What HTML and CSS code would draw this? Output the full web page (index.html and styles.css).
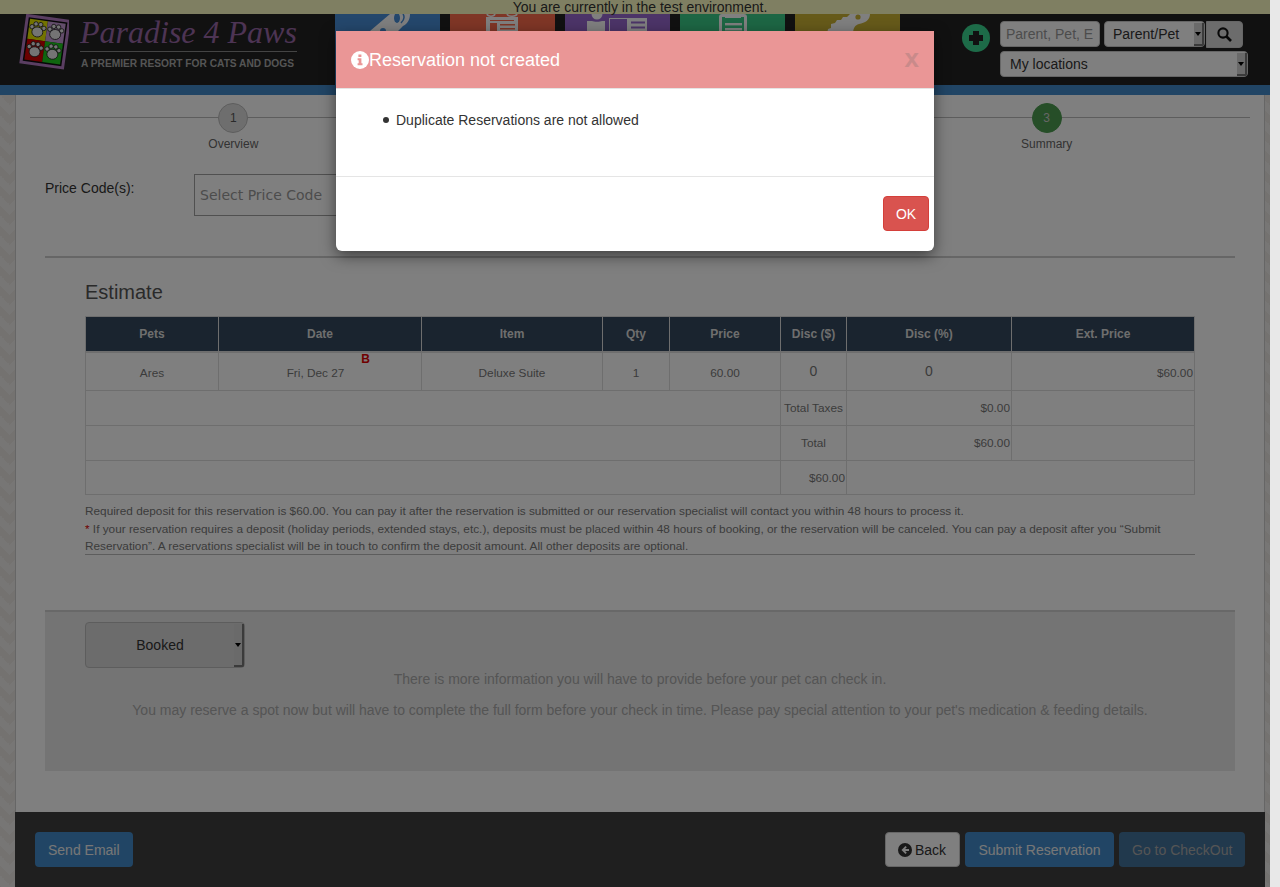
FILE: index.html
```html
<!DOCTYPE html>
<html lang="en">
<head>
    <meta charset="UTF-8">
    <meta name="viewport" content="width=device-width, initial-scale=1.0">
    <title>Reservation</title>
    <link rel="stylesheet" href="styles.css">
</head>
<body>
    <div class="page">
        <div class="test-banner">You are currently in the test environment.</div>

        <header class="top-header">
            <div class="logo">
                <svg class="logo-mark" width="50" height="56" viewBox="0 0 50 56">
                    <g transform="rotate(8 25 28)">
                        <rect x="5" y="4" width="42" height="47" fill="#0d0d0d" stroke="#b57cc4" stroke-width="3"/>
                        <rect x="8" y="7" width="18" height="20" fill="#e6e600"/>
                        <rect x="26" y="7" width="18" height="20" fill="#c79ad6"/>
                        <rect x="8" y="27" width="18" height="21" fill="#d40000"/>
                        <rect x="26" y="27" width="18" height="21" fill="#1ecb1e"/>
                        <g fill="#e8e8e8" stroke="#222" stroke-width="0.8">
                            <g id="paw">
                                <ellipse cx="17" cy="19" rx="5.5" ry="5"/>
                                <circle cx="11" cy="14.5" r="2.2"/>
                                <circle cx="14.6" cy="11.2" r="2.2"/>
                                <circle cx="19.4" cy="11.2" r="2.2"/>
                                <circle cx="23" cy="14.5" r="2.2"/>
                            </g>
                            <use href="#paw" x="18"/>
                            <use href="#paw" y="20"/>
                            <use href="#paw" x="18" y="20"/>
                        </g>
                    </g>
                </svg>
                <div class="logo-words">
                    <div class="logo-name">Paradise 4 Paws</div>
                    <div class="logo-tag">A PREMIER RESORT FOR CATS AND DOGS</div>
                </div>
            </div>

            <nav class="tiles">
                <div class="tile tile-blue">
                    <svg width="105" height="20" viewBox="0 0 105 20"><path d="M35 17 L55 0 H75 C75 6 72 10 68 12 L63 17 Z" fill="#fff"/><ellipse cx="62" cy="4" rx="3" ry="5" fill="#488fd8"/><path d="M68 0 C70 3 69 6 66 9" fill="none" stroke="#488fd8" stroke-width="1.5"/><circle cx="48" cy="17" r="3" fill="#488fd8"/></svg>
                </div>
                <div class="tile tile-red">
                    <svg width="105" height="20" viewBox="0 0 105 20"><path d="M37 0 C38 3 44 3 45 0 M57 0 C58 3 66 3 67 0" fill="none" stroke="#fff" stroke-width="1.6"/><rect x="36" y="3" width="32" height="17" fill="#fff"/><rect x="40" y="6" width="24" height="1" fill="#ff6c4c"/><rect x="40" y="9" width="7" height="8" fill="#ff6c4c"/><rect x="50" y="10" width="15" height="1.5" fill="#ff6c4c"/><rect x="50" y="14" width="15" height="1.5" fill="#ff6c4c"/></svg>
                </div>
                <div class="tile tile-purple">
                    <svg width="105" height="20" viewBox="0 0 105 20"><circle cx="32" cy="0" r="5.5" fill="#fff"/><path d="M22 7 H27 C29 8 35 8 37 7 H40 V20 H22 Z" fill="#fff"/><rect x="44" y="4" width="38" height="16" fill="#fff"/><rect x="45" y="5" width="17" height="15" fill="#9868d0"/><rect x="66" y="7.5" width="14" height="2" fill="#9868d0"/><rect x="66" y="12.5" width="14" height="2" fill="#9868d0"/></svg>
                </div>
                <div class="tile tile-green">
                    <svg width="105" height="20" viewBox="0 0 105 20"><path d="M39 20 V3 Q39 0 42 0 H64 Q67 0 67 3 V20 Z" fill="#fff"/><rect x="42" y="3" width="22" height="17" fill="#3acc88"/><rect x="45" y="2" width="16" height="2" fill="#fff"/><rect x="45" y="9" width="17" height="2.4" fill="#fff"/><rect x="45" y="14" width="17" height="2.4" fill="#fff"/></svg>
                </div>
                <div class="tile tile-yellow">
                    <svg width="105" height="20" viewBox="0 0 105 20"><path d="M32 20 L33 15 L36 14 L36 10 L40 9 L42 6 L46 6 L48 3 L52 3 L55 0 H75 C75 6 70 9 64 10 C60 11 58 14 58 20 Z" fill="#fff"/><circle cx="63" cy="3" r="2.6" fill="#ccb434"/></svg>
                </div>
            </nav>

            <div class="plus-icon">
                <svg width="28" height="28" viewBox="0 0 28 28"><path d="M11 7 H17 V11 H21 V17 H17 V21 H11 V17 H7 V11 H11 Z" fill="#222"/></svg>
            </div>

            <div class="search-area">
                <div class="search-row">
                    <input class="search-input" type="text" placeholder="Parent, Pet, E">
                    <div class="fake-select search-type"><span>Parent/Pet</span><i class="sel-arrow"></i></div>
                    <button class="search-btn">
                        <svg width="15" height="15" viewBox="0 0 15 15"><circle cx="6" cy="6" r="4.6" fill="none" stroke="#111" stroke-width="2.1"/><path d="M9.5 9.5 L14 14" stroke="#111" stroke-width="2.6"/></svg>
                    </button>
                </div>
                <div class="fake-select location-select"><span>My locations</span><i class="sel-arrow"></i></div>
            </div>
        </header>

        <div class="blue-strip"></div>

        <div class="content-wrap">
            <main class="content">
                <div class="stepper">
                    <div class="step"><span class="step-num">1</span><span class="step-label">Overview</span></div>
                    <div class="step"><span class="step-num">2</span><span class="step-label">Details</span></div>
                    <div class="step"><span class="step-num step-done">3</span><span class="step-label">Summary</span></div>
                </div>

                <div class="price-row">
                    <label class="price-label">Price Code(s):</label>
                    <div class="price-select">Select Price Code</div>
                </div>

                <hr class="section-line">

                <section class="estimate">
                    <h3>Estimate</h3>
                    <table class="estimate-table">
                        <colgroup>
                            <col class="c1"><col class="c2"><col class="c3"><col class="c4"><col class="c5"><col class="c6"><col class="c7"><col class="c8">
                        </colgroup>
                        <thead>
                            <tr>
                                <th>Pets</th><th>Date</th><th>Item</th><th>Qty</th><th>Price</th><th>Disc ($)</th><th>Disc (%)</th><th>Ext. Price</th>
                            </tr>
                        </thead>
                        <tbody>
                            <tr class="row-item">
                                <td>Ares</td>
                                <td class="date-cell">Fri, Dec 27<b class="flag-b">B</b></td>
                                <td>Deluxe Suite</td>
                                <td>1</td>
                                <td>60.00</td>
                                <td class="disc">0</td>
                                <td class="disc">0</td>
                                <td class="right">$60.00</td>
                            </tr>
                            <tr>
                                <td colspan="5"></td>
                                <td>Total Taxes</td>
                                <td class="right">$0.00</td>
                                <td></td>
                            </tr>
                            <tr>
                                <td colspan="5"></td>
                                <td>Total</td>
                                <td class="right">$60.00</td>
                                <td></td>
                            </tr>
                            <tr>
                                <td colspan="5"></td>
                                <td class="right">$60.00</td>
                                <td colspan="2"></td>
                            </tr>
                        </tbody>
                    </table>
                    <div class="notes">
                        <p>Required deposit for this reservation is $60.00. You can pay it after the reservation is submitted or our reservation specialist will contact you within 48 hours to process it.</p>
                        <p><span class="star">*</span> If your reservation requires a deposit (holiday periods, extended stays, etc.), deposits must be placed within 48 hours of booking, or the reservation will be canceled. You can pay a deposit after you “Submit Reservation”. A reservations specialist will be in touch to confirm the deposit amount. All other deposits are optional.</p>
                    </div>
                </section>

                <section class="status-panel">
                    <div class="fake-select status-select"><span>Booked</span><i class="sel-arrow"></i></div>
                    <p class="info-one">There is more information you will have to provide before your pet can check in.</p>
                    <p class="info-two">You may reserve a spot now but will have to complete the full form before your check in time. Please pay special attention to your pet's medication &amp; feeding details.</p>
                </section>

                <footer class="action-bar">
                    <button class="btn btn-blue">Send Email</button>
                    <div class="action-right">
                        <button class="btn btn-plain">
                            <svg width="14" height="14" viewBox="0 0 14 14"><circle cx="7" cy="7" r="7" fill="#333"/><path d="M7.5 3 L3.5 7 L7.5 11 L8.8 9.7 L7.1 8 H11 V6 H7.1 L8.8 4.3 Z" fill="#fff"/></svg>
                            Back
                        </button>
                        <button class="btn btn-blue btn-submit">Submit Reservation</button>
                        <button class="btn btn-blue btn-off">Go to CheckOut</button>
                    </div>
                </footer>
            </main>
        </div>

        <!-- dialog -->
        <div class="dialog-overlay">
            <div class="dialog">
                <div class="dialog-header">
                    <svg width="18" height="18" viewBox="0 0 18 18"><circle cx="9" cy="9" r="9" fill="#fff"/><path d="M7.4 3.5 H10.4 V6 H7.4 Z M6.6 7.3 H10.4 V12.3 H11.5 V14.2 H6.6 V12.3 H7.7 V9.2 H6.6 Z" fill="#ea9696"/></svg>
                    <h3>Reservation not created</h3>
                    <button class="close-btn">x</button>
                </div>
                <div class="dialog-body">
                    <ul>
                        <li>Duplicate Reservations are not allowed</li>
                    </ul>
                </div>
                <div class="dialog-footer">
                    <button class="ok-btn">OK</button>
                </div>
            </div>
        </div>
    </div>
    <div class="scroll-strip"></div>
</body>
</html>
```

FILE: styles.css
```css
* {
    box-sizing: border-box;
}

html, body {
    height: 100%;
}

body {
    margin: 0;
    display: flex;
    overflow: hidden;
    font-family: "Liberation Sans", Arial, sans-serif;
    font-size: 14px;
    color: #333;
    background-color: #e8e8e8;
}

.page {
    position: relative;
    width: 1270px;
    height: 887px;
    flex: none;
    overflow: hidden;
}

.scroll-strip {
    flex: 1;
    background-color: #e8e8e8;
}

/* top banner */
.test-banner {
    position: relative;
    z-index: 2;
    height: 14px;
    line-height: 14px;
    text-align: center;
    padding-left: 10px;
    background-color: #ffffc4;
    color: #333;
    font-size: 14px;
}

.top-header {
    display: flex;
    height: 71px;
    background-color: #222;
}

.logo {
    width: 335px;
    flex: none;
    display: flex;
    padding-left: 19px;
}

.logo-mark {
    flex: none;
}

.logo-words {
    margin-left: 11px;
    width: 217px;
    flex: none;
}

.logo-name {
    font-family: "Liberation Serif", serif;
    font-style: italic;
    font-size: 32px;
    line-height: 36px;
    white-space: nowrap;
    color: #9a68a8;
    border-bottom: 1px solid #888;
    height: 38px;
}

.logo-tag {
    margin-top: 5px;
    font-size: 10.2px;
    font-weight: bold;
    line-height: 14px;
    white-space: nowrap;
    padding-left: 1px;
    color: #aaa;
}

.tiles {
    display: flex;
    gap: 10px;
    flex: none;
}

.tile {
    width: 105px;
    height: 71px;
}

.tile svg {
    display: block;
}

.tile-blue { background-color: #488fd8; }
.tile-red { background-color: #ff6c4c; }
.tile-purple { background-color: #9868d0; }
.tile-green { background-color: #3acc88; }
.tile-yellow { background-color: #ccb434; }

.plus-icon {
    width: 28px;
    height: 28px;
    margin: 10px 10px 0 62px;
    flex: none;
    border-radius: 50%;
    background-color: #3ad690;
}

.plus-icon svg {
    display: block;
}

.search-area {
    flex: none;
    padding-top: 7px;
}

.search-row {
    display: flex;
    height: 27px;
    margin-bottom: 3px;
}

.search-input {
    width: 100px;
    height: 26px;
    padding: 0 5px;
    border: 1px solid #ccc;
    border-radius: 4px;
    font-family: "Liberation Sans", Arial, sans-serif;
    font-size: 14px;
    background-color: #fff;
}

.search-input::placeholder {
    color: #999;
}

.search-btn {
    width: 37px;
    height: 27px;
    margin-left: 1px;
    padding: 0;
    border: 1px solid #ccc;
    border-radius: 0 4px 4px 0;
    background-color: #d8d8d8;
}

.search-btn svg {
    display: block;
    margin: 0 auto;
}

/* old style select with a bevelled arrow strip */
.fake-select {
    position: relative;
    display: flex;
    align-items: center;
    border: 1px solid #ccc;
    border-radius: 4px;
    background-color: #fff;
    color: #333;
}

.sel-arrow {
    position: absolute;
    top: 1px;
    right: 0;
    bottom: 0;
    width: 10px;
    background-color: #d4d4d4;
    border-right: 2px solid #777;
    border-bottom: 2px solid #777;
    border-radius: 0 0 2px 0;
}

.sel-arrow::after {
    content: "";
    position: absolute;
    top: 50%;
    left: 1px;
    margin-top: -2px;
    border-left: 3px solid transparent;
    border-right: 3px solid transparent;
    border-top: 4px solid #000;
}

.search-type {
    width: 101px;
    height: 26px;
    margin-left: 4px;
    padding-left: 8px;
}

.location-select {
    width: 248px;
    height: 26px;
    padding-left: 9px;
}

.blue-strip {
    height: 10px;
    background-color: #428bca;
}

/* page body */
.content-wrap {
    height: 792px;
    padding: 0 5px 0 15px;
    background:
        linear-gradient(135deg, #e8e5e0 25%, transparent 25%) -10px 0,
        linear-gradient(225deg, #e8e5e0 25%, transparent 25%) -10px 0,
        linear-gradient(315deg, #e8e5e0 25%, transparent 25%),
        linear-gradient(45deg, #e8e5e0 25%, transparent 25%);
    background-size: 20px 20px;
    background-color: #efedea;
}

.content {
    position: relative;
    height: 792px;
    background-color: #fff;
    border-left: 1px solid #ccc;
    border-right: 1px solid #ccc;
    padding-top: 8px;
}

.stepper {
    display: grid;
    grid-template-columns: repeat(3, 1fr);
    margin: 0 14px 0 14px;
    height: 50px;
    background-image: linear-gradient(#bbb, #bbb);
    background-size: 100% 1px;
    background-position: 0 14px;
    background-repeat: no-repeat;
}

.step {
    display: flex;
    flex-direction: column;
    align-items: center;
}

.step-num {
    width: 30px;
    height: 30px;
    line-height: 28px;
    text-align: center;
    border: 1px solid #bbb;
    border-radius: 50%;
    background-color: #ddd;
    font-size: 12px;
    color: #555;
}

.step-done {
    background-color: #4c9c50;
    border-color: #4c9c50;
    color: #ccc;
}

.step-label {
    margin-top: 3px;
    font-size: 12px;
    line-height: 16px;
    color: #666;
}

.price-row {
    display: flex;
    margin: 21px 0 0 29px;
    height: 42px;
}

.price-label {
    width: 149px;
    flex: none;
    padding-top: 5px;
    font-size: 14px;
    line-height: 18px;
    color: #333;
}

.price-select {
    width: 300px;
    height: 42px;
    line-height: 41px;
    padding-left: 5px;
    border: 1px solid #a0a0a0;
    font-family: "DejaVu Sans", sans-serif;
    font-size: 14px;
    color: #999;
}

.section-line {
    height: 2px;
    margin: 40px 29px 0 29px;
    border: 0;
    background-color: #ccc;
}

.estimate {
    margin: 0 69px 0 69px;
}

.estimate h3 {
    margin: 21px 0 11px;
    font-size: 20px;
    font-weight: normal;
    line-height: 26px;
    color: #555;
}

.estimate-table {
    width: 1109px;
    table-layout: fixed;
    border-collapse: collapse;
    font-size: 11.8px;
    color: #777;
}

.c1 { width: 133px; }
.c2 { width: 203px; }
.c3 { width: 181px; }
.c4 { width: 67px; }
.c5 { width: 111px; }
.c6 { width: 66px; }
.c7 { width: 165px; }
.c8 { width: 183px; }

.estimate-table th {
    height: 35px;
    padding: 0;
    background-color: #34495e;
    border: 1px solid #ddd;
    border-bottom: 2px solid #ddd;
    font-size: 12px;
    color: #ddd;
}

.estimate-table td {
    height: 35px;
    padding: 0 1px;
    text-align: center;
    border: 1px solid #ddd;
    background-color: transparent;
}

.estimate-table .row-item td {
    height: 39px;
    padding-top: 3px;
}

.estimate-table tbody tr:last-child td {
    height: 34px;
}

.estimate-table td.right {
    text-align: right;
}

.estimate-table .row-item td.disc {
    font-size: 14px;
    padding-top: 0;
}

.estimate-table .row-item .date-cell {
    position: relative;
    padding-right: 10px;
}

.flag-b {
    position: absolute;
    top: -1px;
    right: 51px;
    font-size: 12px;
    color: #e00000;
}

.notes {
    height: 52px;
    border-bottom: 1px solid #bbb;
    margin-top: 8px;
    font-size: 11.8px;
    line-height: 17px;
    color: #777;
}

.notes p {
    margin: 0 0 1px;
}

.star {
    color: #e00000;
}

.status-panel {
    position: relative;
    height: 161px;
    margin: 55px 29px 0 29px;
    padding: 10px 40px 0;
    background-color: #e8e8e8;
    border-top: 2px solid #d0d0d0;
    text-align: center;
    color: #aaa;
}

.status-panel p {
    margin: 0;
    line-height: 20px;
}

.status-select {
    width: 160px;
    height: 46px;
    justify-content: center;
    padding-right: 10px;
    background-color: #d8d8d8;
    color: #333;
    border-color: #bbb;
}

.status-panel .info-one {
    margin-top: 1px;
}

.status-panel .info-two {
    margin-top: 11px;
}

.action-bar {
    position: absolute;
    left: -1px;
    right: -1px;
    bottom: 0;
    height: 75px;
    display: flex;
    justify-content: space-between;
    padding: 20px 20px 0;
    background-color: #3e3e3e;
}

.action-right {
    display: flex;
    gap: 5px;
}

.btn {
    height: 35px;
    padding: 0 12px;
    border: 1px solid transparent;
    border-radius: 4px;
    font-family: "Liberation Sans", Arial, sans-serif;
    font-size: 14px;
    white-space: nowrap;
}

.btn-blue {
    background-color: #428bca;
    color: #eee;
}

.btn-submit {
    width: 149px;
}

.btn-off {
    width: 126px;
    background-color: #43729b;
    color: #aaa;
}

.btn-plain {
    width: 75px;
    display: flex;
    align-items: center;
    gap: 3px;
    background-color: #fff;
    border-color: #ccc;
    color: #333;
}

/* dialog */
.dialog-overlay {
    position: absolute;
    top: 0;
    left: 0;
    right: 0;
    bottom: 0;
    z-index: 10;
    display: flex;
    justify-content: center;
    align-items: flex-start;
    padding-top: 31px;
    background-color: rgba(0, 0, 0, 0.5);
}

.dialog {
    width: 598px;
    height: 220px;
    background-color: #fff;
    border-radius: 0 0 6px 6px;
    box-shadow: 0 5px 15px rgba(0, 0, 0, 0.5);
    display: flex;
    flex-direction: column;
}

.dialog-header {
    display: flex;
    align-items: center;
    height: 58px;
    padding: 0 15px;
    background-color: #ea9696;
    border-bottom: 1px solid #e5e5e5;
    color: #fff;
}

.dialog-header h3 {
    flex: 1;
    margin: 0;
    font-size: 18px;
    font-weight: normal;
    line-height: 20px;
}

.close-btn {
    padding: 0 0 4px;
    border: 0;
    background: none;
    font-family: "Liberation Sans", Arial, sans-serif;
    font-size: 26px;
    font-weight: bold;
    line-height: 1;
    color: #c98a8a;
}

.dialog-body {
    height: 88px;
    padding: 21px 15px 0 47px;
    border-bottom: 1px solid #e5e5e5;
}

.dialog-body ul {
    margin: 0;
    padding: 0;
    list-style: none;
    font-size: 14px;
    line-height: 20px;
}

.dialog-body li::before {
    content: "";
    display: inline-block;
    width: 6px;
    height: 6px;
    margin-right: 7px;
    vertical-align: 2px;
    border-radius: 50%;
    background-color: #333;
}

.dialog-footer {
    display: flex;
    justify-content: flex-end;
    padding: 19px 5px 0;
}

.ok-btn {
    height: 35px;
    width: 46px;
    padding: 0;
    border: 1px solid #d43f3a;
    border-radius: 4px;
    background-color: #d9534f;
    color: #fff;
    font-family: "Liberation Sans", Arial, sans-serif;
    font-size: 14px;
}
```
